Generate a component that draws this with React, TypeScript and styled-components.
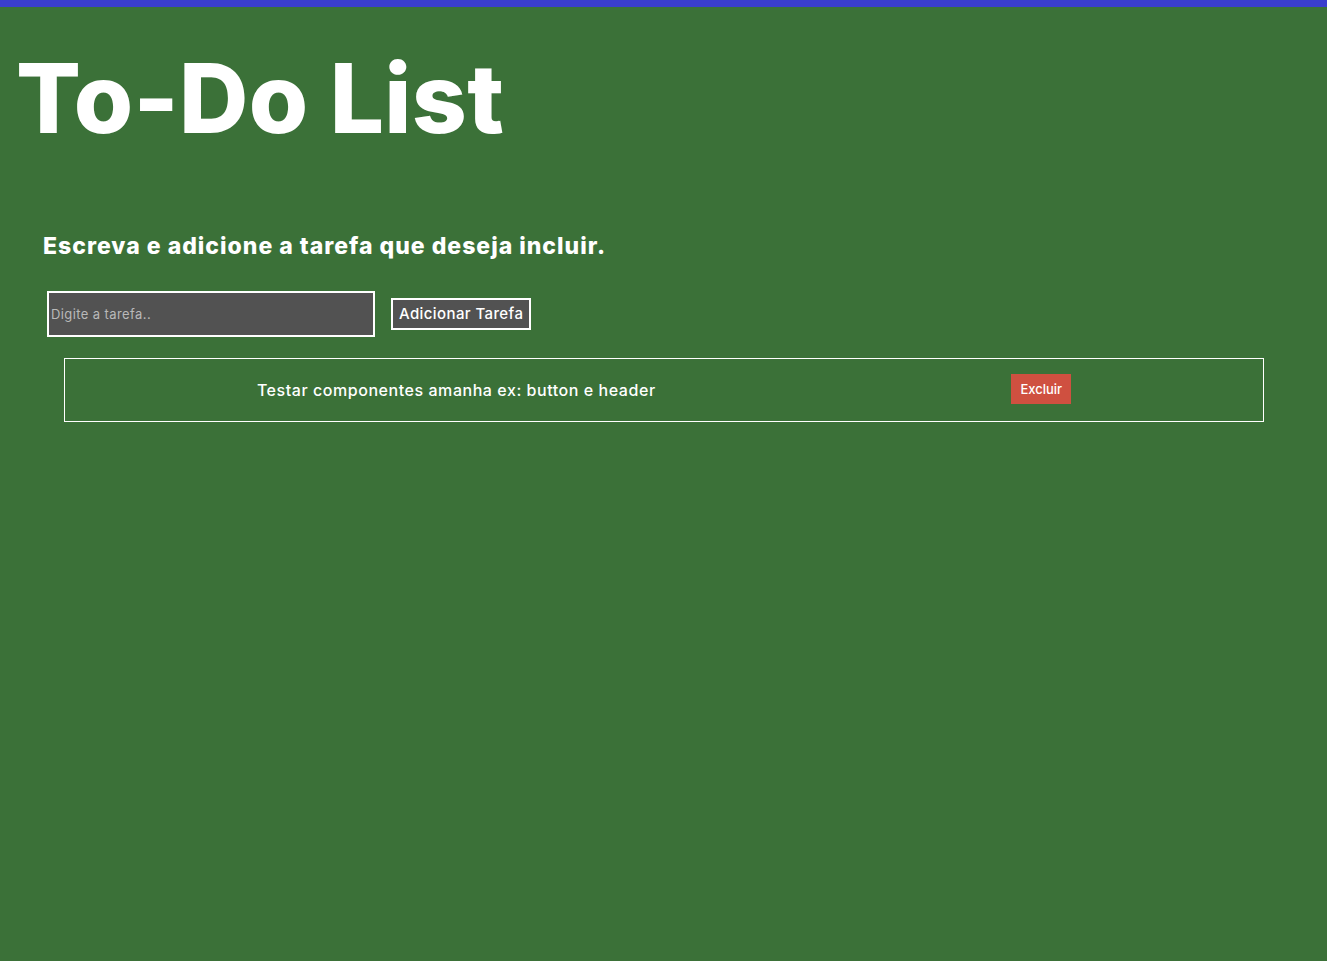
import styled, { createGlobalStyle } from "styled-components";
import { useState } from "react";

const GlobalStyle = createGlobalStyle`
  html, body {
    margin: 0;
    padding: 0;
    background-color: #3b7138;
    min-height: 100%;
  }
  body {
    border-top: 7px solid #3a3dcc;
    font-family: "Inter", "Noto Sans", sans-serif;
    color: #ffffff;
    min-height: 954px;
  }
`;

const Wrapper = styled.div`
  display: flex;
  flex-direction: column;
`;

const Title = styled.h1`
  margin: 39px 0 0 16px;
  font-size: 96px;
  font-weight: 800;
  line-height: 1.1;
  letter-spacing: 0.3px;
`;

const Content = styled.div`
  display: flex;
  flex-direction: column;
  padding: 0 63px 0 43px;
  margin-top: 80px;
`;

const Subtitle = styled.h2`
  margin: 0;
  font-size: 23px;
  font-weight: 800;
  letter-spacing: 1px;
`;

const Form = styled.form`
  display: flex;
  align-items: center;
  gap: 16px;
  margin: 31px 0 0 4px;
`;

const TaskInput = styled.input`
  box-sizing: border-box;
  width: 328px;
  height: 46px;
  padding: 0 2px;
  background-color: #525252;
  border: 2px solid #ffffff;
  color: #ffffff;
  font-family: "Inter", sans-serif;
  font-size: 13px;
  letter-spacing: 0.4px;
  outline: none;
  &::placeholder {
    color: #b9b9b9;
  }
`;

const AddButton = styled.button`
  box-sizing: border-box;
  height: 32px;
  padding: 0 6px;
  background-color: #525252;
  border: 2px solid #ffffff;
  color: #ffffff;
  font-family: "Inter", sans-serif;
  font-size: 15px;
  font-weight: 500;
  letter-spacing: 0.4px;
  cursor: pointer;
`;

const TaskList = styled.ul`
  list-style: none;
  margin: 21px 0 0 21px;
  padding: 0;
  display: flex;
  flex-direction: column;
  gap: 10px;
`;

const TaskItem = styled.li`
  box-sizing: border-box;
  height: 64px;
  padding: 0 14px;
  border: 1px solid #ffffff;
  display: flex;
  align-items: center;
  justify-content: space-around;
`;

const TaskText = styled.span`
  font-size: 16px;
  font-weight: 500;
  letter-spacing: 0.55px;
`;

const DeleteButton = styled.button`
  height: 30px;
  padding: 0 9px;
  background-color: #cf5040;
  border: none;
  color: #ffffff;
  font-family: "Inter", sans-serif;
  font-size: 13px;
  font-weight: 500;
  cursor: pointer;
  margin-top: -2px;
`;

export default function App() {
  const [tasks, setTasks] = useState<string[]>([
    "Testar componentes amanha ex: button e header",
  ]);
  const [value, setValue] = useState("");

  const onSubmit = (e: React.FormEvent) => {
    e.preventDefault();
    if (!value.trim()) return;
    setTasks([...tasks, value]);
    setValue("");
  };

  return (
    <Wrapper>
      <GlobalStyle />
      <Title>To-Do List</Title>
      <Content>
        <Subtitle>Escreva e adicione a tarefa que deseja incluir.</Subtitle>
        <Form onSubmit={onSubmit}>
          <TaskInput
            placeholder="Digite a tarefa.."
            value={value}
            onChange={(e) => setValue(e.target.value)}
          />
          <AddButton type="submit">Adicionar Tarefa</AddButton>
        </Form>
        <TaskList>
          {tasks.map((task, i) => (
            <TaskItem key={i}>
              <TaskText>{task}</TaskText>
              <DeleteButton
                onClick={() => setTasks(tasks.filter((_, j) => j !== i))}
              >
                Excluir
              </DeleteButton>
            </TaskItem>
          ))}
        </TaskList>
      </Content>
    </Wrapper>
  );
}
